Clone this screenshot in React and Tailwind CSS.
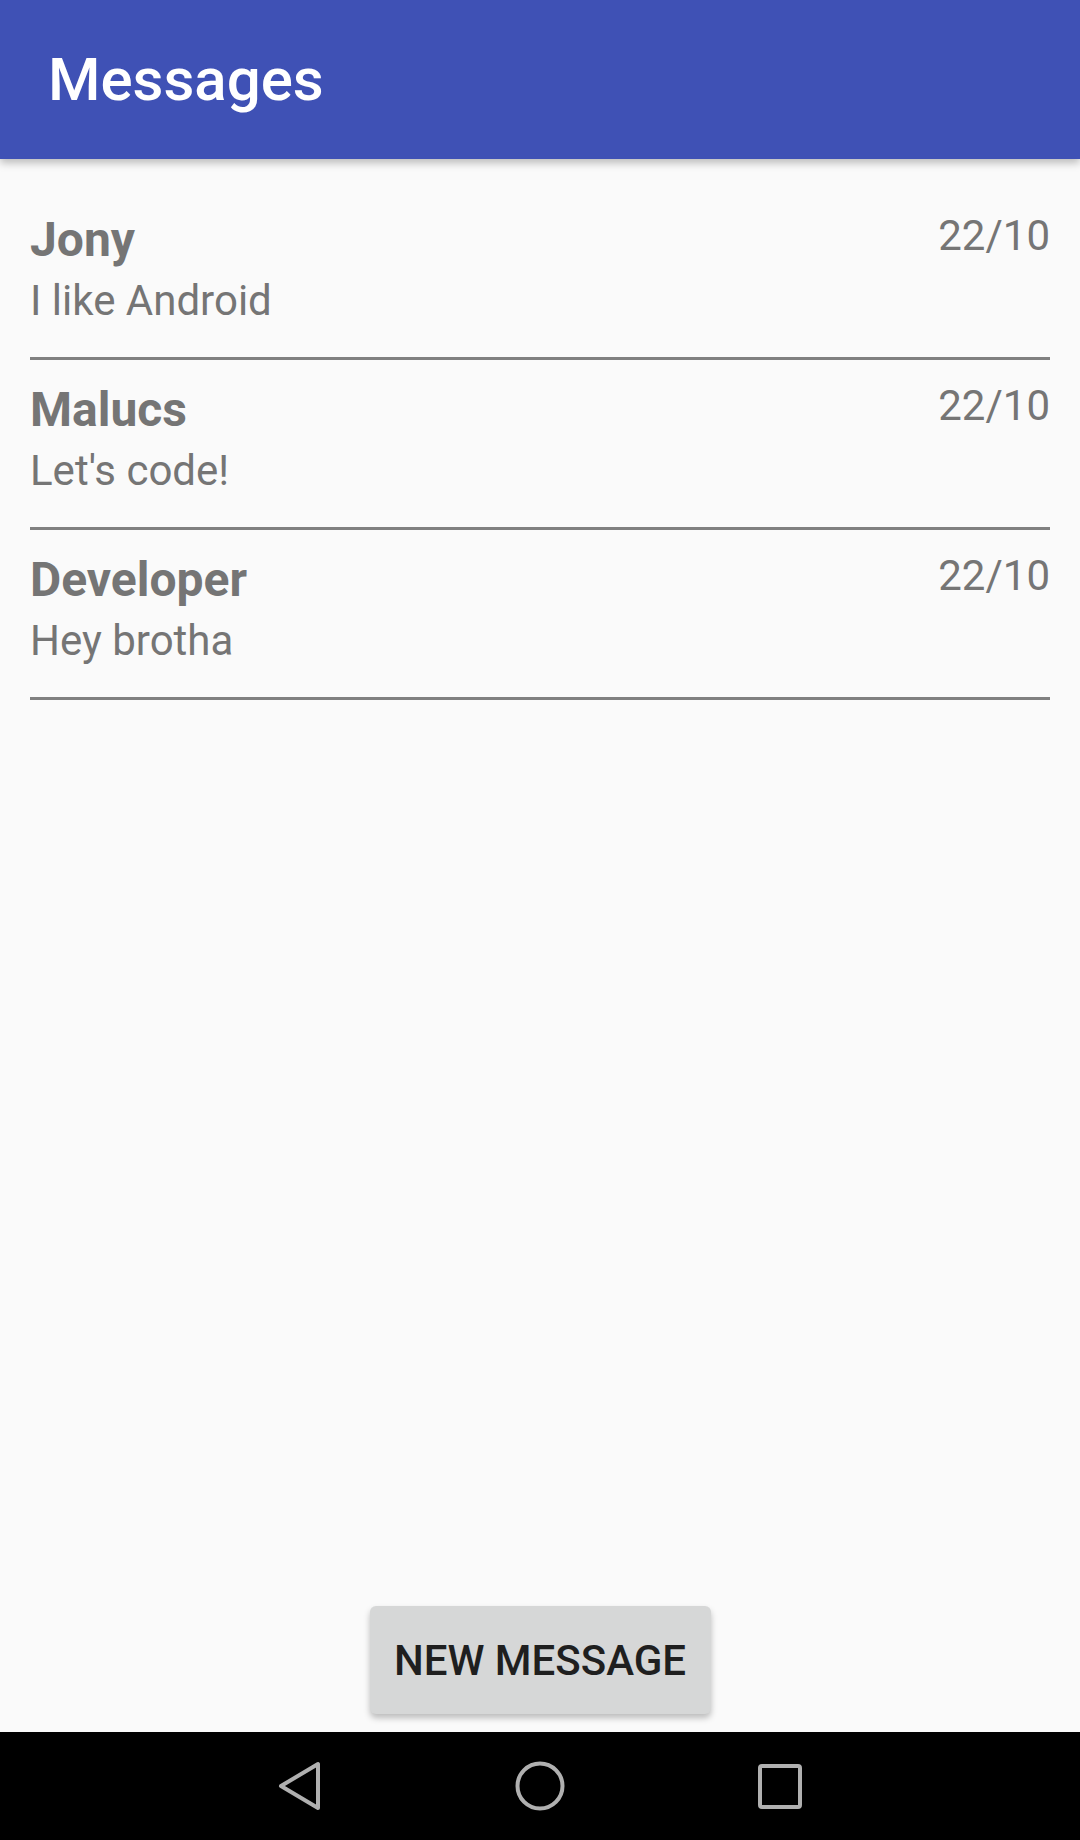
import React from 'react';

const messages = [
  { name: 'Jony', text: 'I like Android', date: '22/10' },
  { name: 'Malucs', text: "Let's code!", date: '22/10' },
  { name: 'Developer', text: 'Hey brotha', date: '22/10' },
];

const MessageRow = ({ name, text, date }) => (
  <div className="flex justify-between items-start pt-[25px] pb-[32px] border-b-[3px] border-[#808080]">
    <div className="flex flex-col gap-[12px]">
      <p className="text-[48px] leading-[49px] font-bold text-[#757575]">{name}</p>
      <p className="text-[42px] leading-[49px] text-[#757575]">{text}</p>
    </div>
    <p className="-mt-[4px] text-[42px] leading-[49px] text-[#757575]">{date}</p>
  </div>
);

const NavBar = () => (
  <div className="h-[108px] bg-black flex items-center justify-center gap-[120px]">
    <div className="w-[120px] flex justify-center">
      <svg width="48" height="52" viewBox="0 0 48 52" fill="none">
        <polygon points="5,26 42,4 42,48" stroke="#b0b0b0" strokeWidth="4" strokeLinejoin="round" />
      </svg>
    </div>
    <div className="w-[120px] flex justify-center">
      <svg width="52" height="52" viewBox="0 0 52 52" fill="none">
        <circle cx="26" cy="26" r="22.5" stroke="#b0b0b0" strokeWidth="4" />
      </svg>
    </div>
    <div className="w-[120px] flex justify-center">
      <svg width="48" height="52" viewBox="0 0 48 52" fill="none">
        <rect x="4" y="6" width="40" height="41" rx="2" stroke="#b0b0b0" strokeWidth="4" />
      </svg>
    </div>
  </div>
);

export default function App() {
  return (
    <div className="w-[1080px] h-[1840px] flex flex-col bg-[#fafafa] font-['Roboto',sans-serif]">
      {/* Toolbar */}
      <header className="relative z-10 h-[159px] shrink-0 bg-[#3f51b5] flex items-center pl-[48px] shadow-[0_4px_8px_rgba(0,0,0,0.25)]">
        <h1 className="text-[60px] leading-[60px] font-medium text-white">Messages</h1>
      </header>

      {/* Message list */}
      <main className="flex-1 flex flex-col">
        <div className="px-[30px] pt-[31px]">
          {messages.map((m) => (
            <MessageRow key={m.name} {...m} />
          ))}
        </div>

        <div className="mt-auto flex justify-center pb-[18px]">
          <button className="w-[341px] h-[108px] rounded-[6px] bg-[#d6d7d7] text-[42px] font-medium uppercase text-[#1f1f1f] shadow-[0_4px_6px_rgba(0,0,0,0.25)]">
            New Message
          </button>
        </div>
      </main>

      <NavBar />
    </div>
  );
}
